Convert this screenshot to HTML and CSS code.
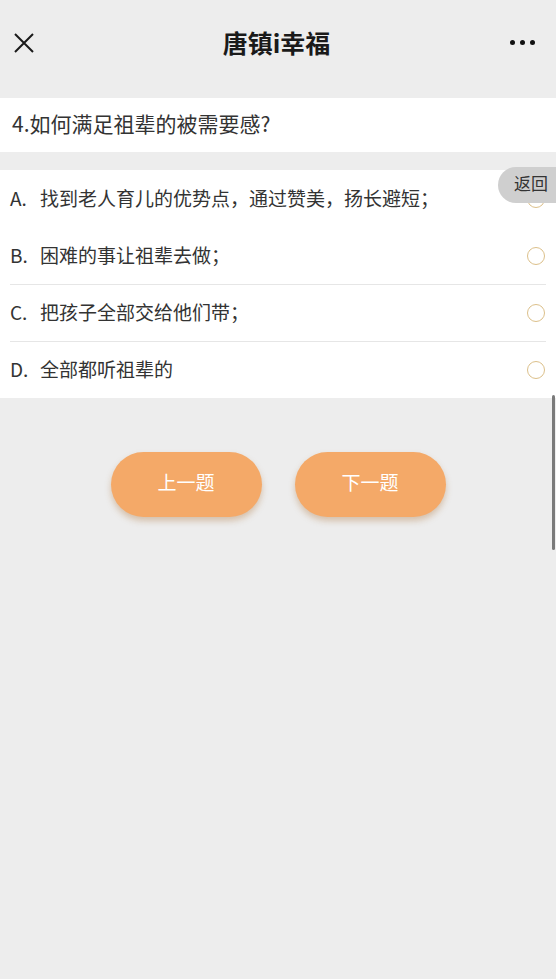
FILE: index.html
```html
<!DOCTYPE html>
<html lang="zh-CN">
<head>
  <meta charset="UTF-8">
  <meta name="viewport" content="width=device-width, initial-scale=1.0">
  <title>唐镇i幸福</title>
  <link rel="stylesheet" href="styles.css">
</head>
<body>
  <div class="page">
    <header class="nav-bar">
      <span class="nav-close">
        <svg width="22" height="22" viewBox="0 0 22 22">
          <path d="M2 2 L20 20 M20 2 L2 20" stroke="#1a1a1a" stroke-width="2" fill="none"/>
        </svg>
      </span>
      <h1 class="nav-title">唐镇i幸福</h1>
      <span class="nav-more">
        <i></i><i></i><i></i>
      </span>
    </header>

    <div class="question">4.如何满足祖辈的被需要感?</div>

    <div class="options">
      <label class="option">
        <span class="option-key">A.</span>
        <span class="option-text">找到老人育儿的优势点，通过赞美，扬长避短；</span>
        <span class="radio"></span>
      </label>
      <label class="option">
        <span class="option-key">B.</span>
        <span class="option-text">困难的事让祖辈去做；</span>
        <span class="radio"></span>
      </label>
      <label class="option">
        <span class="option-key">C.</span>
        <span class="option-text">把孩子全部交给他们带；</span>
        <span class="radio"></span>
      </label>
      <label class="option">
        <span class="option-key">D.</span>
        <span class="option-text">全部都听祖辈的</span>
        <span class="radio"></span>
      </label>
      <a href="#" class="back-tab">返回</a>
    </div>

    <div class="actions">
      <button class="btn">上一题</button>
      <button class="btn">下一题</button>
    </div>

    <div class="scroll-thumb"></div>
  </div>
</body>
</html>
```

FILE: styles.css
```css
* {
  margin: 0;
  padding: 0;
  box-sizing: border-box;
}

body {
  font-family: "Noto Sans CJK SC", "Noto Sans", sans-serif;
  background: #ededed;
  color: #333;
}

.page {
  position: relative;
  min-height: 979px;
  background: #ededed;
}

.nav-bar {
  height: 98px;
  display: flex;
  align-items: flex-start;
  justify-content: space-between;
  padding: 26px 21px 0 13px;
}

.nav-close {
  display: flex;
  width: 22px;
  height: 22px;
  margin-top: 6px;
}

.nav-title {
  font-size: 25px;
  font-weight: 700;
  color: #1a1a1a;
  line-height: 32px;
  margin-left: 8px;
}

.nav-more {
  display: flex;
  gap: 5px;
  margin-top: 14px;
}

.nav-more i {
  width: 5px;
  height: 5px;
  border-radius: 50%;
  background: #111;
}

.question {
  background: #fff;
  height: 54px;
  padding: 0 12px;
  font-size: 21px;
  line-height: 50px;
  color: #333;
}

.options {
  position: relative;
  background: #fff;
  margin-top: 18px;
  padding: 0 10px;
}

.option {
  display: flex;
  align-items: center;
  height: 57px;
  border-top: 1px solid #e6e6e6;
  font-size: 19px;
  color: #333;
  padding-bottom: 3px;
}

.option:first-child,
.option:nth-child(2) {
  border-top: none;
}

.option-key {
  width: 30px;
}

.option-text {
  flex: 1;
}

.radio {
  width: 18px;
  height: 18px;
  border: 1.5px solid #dcc08a;
  border-radius: 50%;
  margin-right: 1px;
  margin-top: 3px;
}

.back-tab {
  position: absolute;
  top: -3px;
  right: 0;
  width: 58px;
  height: 36px;
  border-radius: 18px 0 0 18px;
  background: #cfcfcf;
  color: #333;
  font-size: 17px;
  line-height: 32px;
  text-align: right;
  padding-right: 8px;
  text-decoration: none;
}

.actions {
  display: flex;
  justify-content: center;
  gap: 33px;
  margin-top: 54px;
}

.btn {
  width: 151px;
  height: 65px;
  border: none;
  border-radius: 33px;
  background: #f4a968;
  color: #fff;
  font-family: inherit;
  font-size: 19px;
  padding-bottom: 6px;
  box-shadow: 0 4px 6px rgba(170, 110, 50, 0.35);
  cursor: pointer;
}

.scroll-thumb {
  position: absolute;
  top: 395px;
  right: 1px;
  width: 3px;
  height: 155px;
  border-radius: 2px;
  background: #7a7a7a;
}
```
